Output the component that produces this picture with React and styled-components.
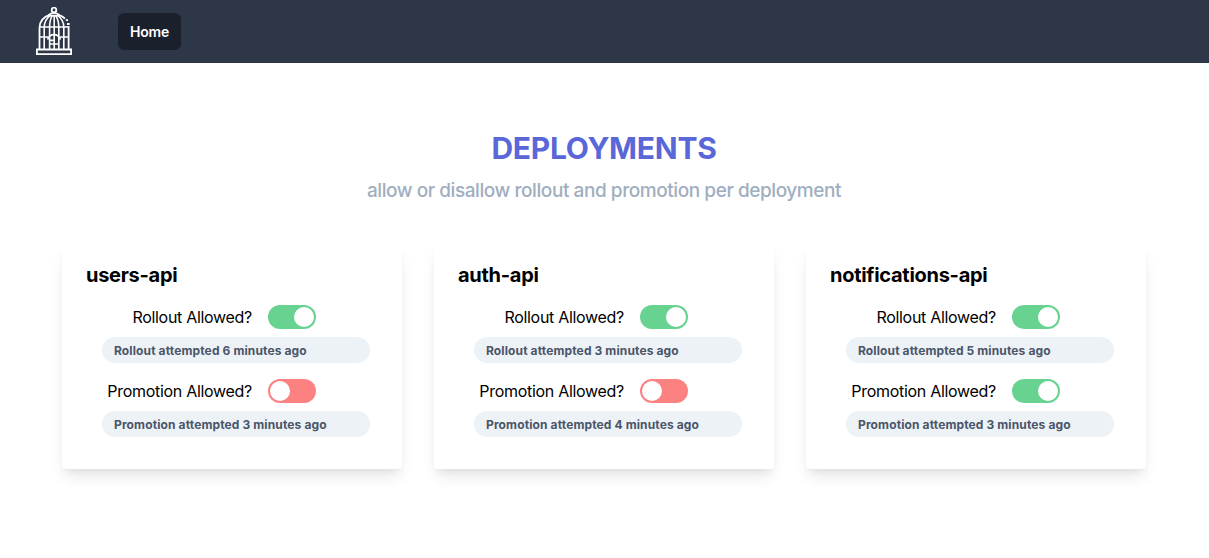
import React from "react";
import styled, { createGlobalStyle } from "styled-components";

const GlobalStyle = createGlobalStyle`
  *, *::before, *::after { box-sizing: border-box; }
  body {
    margin: 0;
    min-height: 100vh;
    background: #fff;
    color: #000;
    font-family: Inter, "Liberation Sans", sans-serif;
    font-size: 16px;
    line-height: 1.5;
  }
  h1, h2, p { margin: 0; }
`;

const NavBar = styled.nav`
  display: flex;
  align-items: center;
  height: 63px;
  padding: 0 36px;
  gap: 46px;
  background: #2d3748;
`;

const Logo = styled.svg`
  display: block;
  width: 36px;
  height: 48px;
  margin-bottom: 1px;
  flex: none;
`;

const NavLink = styled.a`
  display: flex;
  align-items: center;
  justify-content: center;
  width: 63px;
  height: 37px;
  border-radius: 6px;
  background: #1a202c;
  color: #fff;
  font-size: 14px;
  font-weight: 600;
  letter-spacing: -0.15px;
  text-decoration: none;
`;

const Page = styled.main`
  width: 1084px;
  margin: 0 0 0 62px;
  padding: 63px 0 89px;
`;

const Header = styled.header`
  text-align: center;
`;

const Title = styled.h1`
  font-size: 30px;
  line-height: 45px;
  font-weight: 700;
  letter-spacing: -0.25px;
  color: #5a67d8;
`;

const Subtitle = styled.p`
  margin-top: 6px;
  font-size: 19px;
  line-height: 28px;
  font-weight: 500;
  letter-spacing: -0.43px;
  color: #a0aec0;
`;

const Grid = styled.div`
  display: grid;
  grid-template-columns: repeat(3, 340px);
  gap: 32px;
  padding-top: 40px;
`;

const Card = styled.section`
  height: 224px;
  padding: 15px 24px 0;
  border-radius: 4px;
  background: #fff;
  box-shadow: 0 10px 15px -3px rgba(0, 0, 0, 0.1), 0 4px 6px -2px rgba(0, 0, 0, 0.05);
`;

const Name = styled.h2`
  margin-bottom: 15px;
  font-size: 20px;
  line-height: 30px;
  font-weight: 700;
  letter-spacing: -0.28px;
`;

const Setting = styled.div`
  padding: 0 8px 16px 0;
`;

const SettingRow = styled.label`
  display: grid;
  grid-template-columns: 166px auto;
  column-gap: 16px;
  justify-content: start;
  align-items: center;
  height: 24px;
`;

const Label = styled.span`
  text-align: right;
  white-space: nowrap;
  letter-spacing: -0.3px;
`;

const Toggle = styled.span`
  display: flex;
  justify-content: ${(p) => (p.$on ? "flex-end" : "flex-start")};
  width: 48px;
  height: 24px;
  padding: 2px;
  border-radius: 12px;
  background: ${(p) => (p.$on ? "#68d391" : "#fc8181")};
`;

const Thumb = styled.span`
  width: 20px;
  height: 20px;
  border-radius: 50%;
  background: #fff;
`;

const Status = styled.div`
  margin: 8px 0 0 16px;
  height: 26px;
  padding: 0 12px;
  border-radius: 13px;
  background: #edf2f7;
  color: #4a5568;
  font-size: 12px;
  line-height: 27px;
  font-weight: 700;
  white-space: nowrap;
  letter-spacing: 0.12px;
`;

const deployments = [
  { name: "users-api", rollout: [true, 6], promotion: [false, 3] },
  { name: "auth-api", rollout: [true, 3], promotion: [false, 4] },
  { name: "notifications-api", rollout: [true, 5], promotion: [true, 3] },
];

function BirdCage() {
  return (
    <Logo viewBox="36 7 36 48" fill="none" stroke="#fff" strokeWidth="1.8" aria-label="Bird cage">
      <circle cx="54" cy="10" r="2.3" />
      <path d="M48.6 15.2C50.3 13.2 52 12.9 54 12.9s3.7.3 5.4 2.3M48.6 15.6h10.8" />
      <path d="M49.5 14.8C43 17 39.5 21.5 39.5 28V49M58.5 14.8C61.5 15.8 63.5 17 65 18.7" />
      <path d="M65.8 20.2h2.2M67 24h2.6M68.6 26V49" />
      <path d="M50.4 15.4C46 18.5 44.2 22 44.2 27.5V49M52.4 15.4C50 19 49.6 22 49.6 27.5V49M55.6 15.4C58 19 58.8 22 58.8 27.5V49M57.6 15.4C62 18.5 63.8 22 63.8 27.5V49M54.2 15.4V49" strokeWidth="1.6" />
      <path d="M39.5 27H68.5M39.5 37H48.5M60 37H68.5" strokeWidth="1.5" />
      <path d="M47.6 39.6C48.8 36 51 34.6 54 34.6s5.2 1.4 6.4 5M49.6 40.4H54.2M49.6 44H58.8" strokeWidth="1.7" />
      <path d="M36.9 49.5H71.1V54.1H36.9Z" />
    </Logo>
  );
}

function DeploymentSetting({ kind, value }) {
  const [on, minutes] = value;
  return (
    <Setting>
      <SettingRow>
        <Label>{kind} Allowed?</Label>
        <Toggle $on={on}>
          <Thumb />
        </Toggle>
      </SettingRow>
      <Status>{`${kind} attempted ${minutes} minutes ago`}</Status>
    </Setting>
  );
}

export default function App() {
  return (
    <>
      <GlobalStyle />
      <NavBar>
        <BirdCage />
        <NavLink>Home</NavLink>
      </NavBar>
      <Page>
        <Header>
          <Title>DEPLOYMENTS</Title>
          <Subtitle>allow or disallow rollout and promotion per deployment</Subtitle>
        </Header>
        <Grid>
          {deployments.map((d) => (
            <Card key={d.name}>
              <Name>{d.name}</Name>
              <DeploymentSetting kind="Rollout" value={d.rollout} />
              <DeploymentSetting kind="Promotion" value={d.promotion} />
            </Card>
          ))}
        </Grid>
      </Page>
    </>
  );
}
